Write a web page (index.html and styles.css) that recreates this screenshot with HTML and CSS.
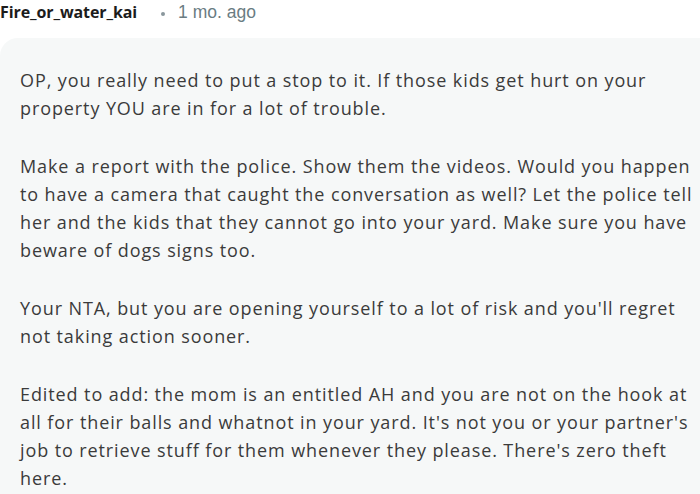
FILE: index.html
```html
<!DOCTYPE html>
<html lang="en">
<head>
<meta charset="utf-8">
<title>Comment</title>
<link rel="stylesheet" href="styles.css">
</head>
<body>
<div class="comment">
  <div class="meta">
    <span class="author">Fire_or_water_kai</span>
    <span class="dot"></span>
    <span class="time">1 mo. ago</span>
  </div>
  <div class="body">
    <p>OP, you really need to put a stop to it. If those kids get hurt on your property YOU are in for a lot of trouble.</p>
    <p>Make a report with the police. Show them the videos. Would you happen to have a camera that caught the conversation as well? Let the police tell her and the kids that they cannot go into your yard. Make sure you have beware of dogs signs too.</p>
    <p>Your NTA, but you are opening yourself to a lot of risk and you'll regret not taking action sooner.</p>
    <p>Edited to add: the mom is an entitled AH and you are not on the hook at all for their balls and whatnot in your yard. It's not you or your partner's job to retrieve stuff for them whenever they please. There's zero theft here.</p>
  </div>
</div>
</body>
</html>
```
FILE: styles.css
```css
html, body {
  margin: 0;
  padding: 0;
  background: #ffffff;
}
body {
  width: 700px;
  height: 494px;
  overflow: hidden;
}
.comment {
  display: flex;
  flex-direction: column;
  height: 494px;
}
.meta {
  display: flex;
  align-items: center;
  height: 24px;
  flex: none;
  font-family: "Open Sans", "Noto Sans", sans-serif;
  font-size: 16px;
  line-height: 22px;
}
.author {
  font-weight: 700;
  color: #1c1c1c;
  letter-spacing: -0.1px;
}
.dot {
  width: 4px;
  height: 4px;
  border-radius: 50%;
  background: #8a979c;
  margin-left: 24px;
  margin-top: 3px;
}
.time {
  font-family: "Liberation Sans", Arial, sans-serif;
  color: #6a7c82;
  font-size: 17.5px;
  margin-left: 13px;
}
.body {
  flex: 1;
  min-height: 0;
  overflow: hidden;
  margin-top: 14px;
  margin-right: -30px;
  background: #f6f8f8;
  border-top-left-radius: 18px;
  padding: 28px 27px 0 20px;
  font-family: "Open Sans", "Noto Sans", sans-serif;
  font-size: 18px;
  line-height: 28px;
  color: #3b3b3b;
}
.body p {
  margin: 0 0 30px 0;
  letter-spacing: 0.9px;
}
.body p:last-child {
  margin-bottom: 0;
}
```
